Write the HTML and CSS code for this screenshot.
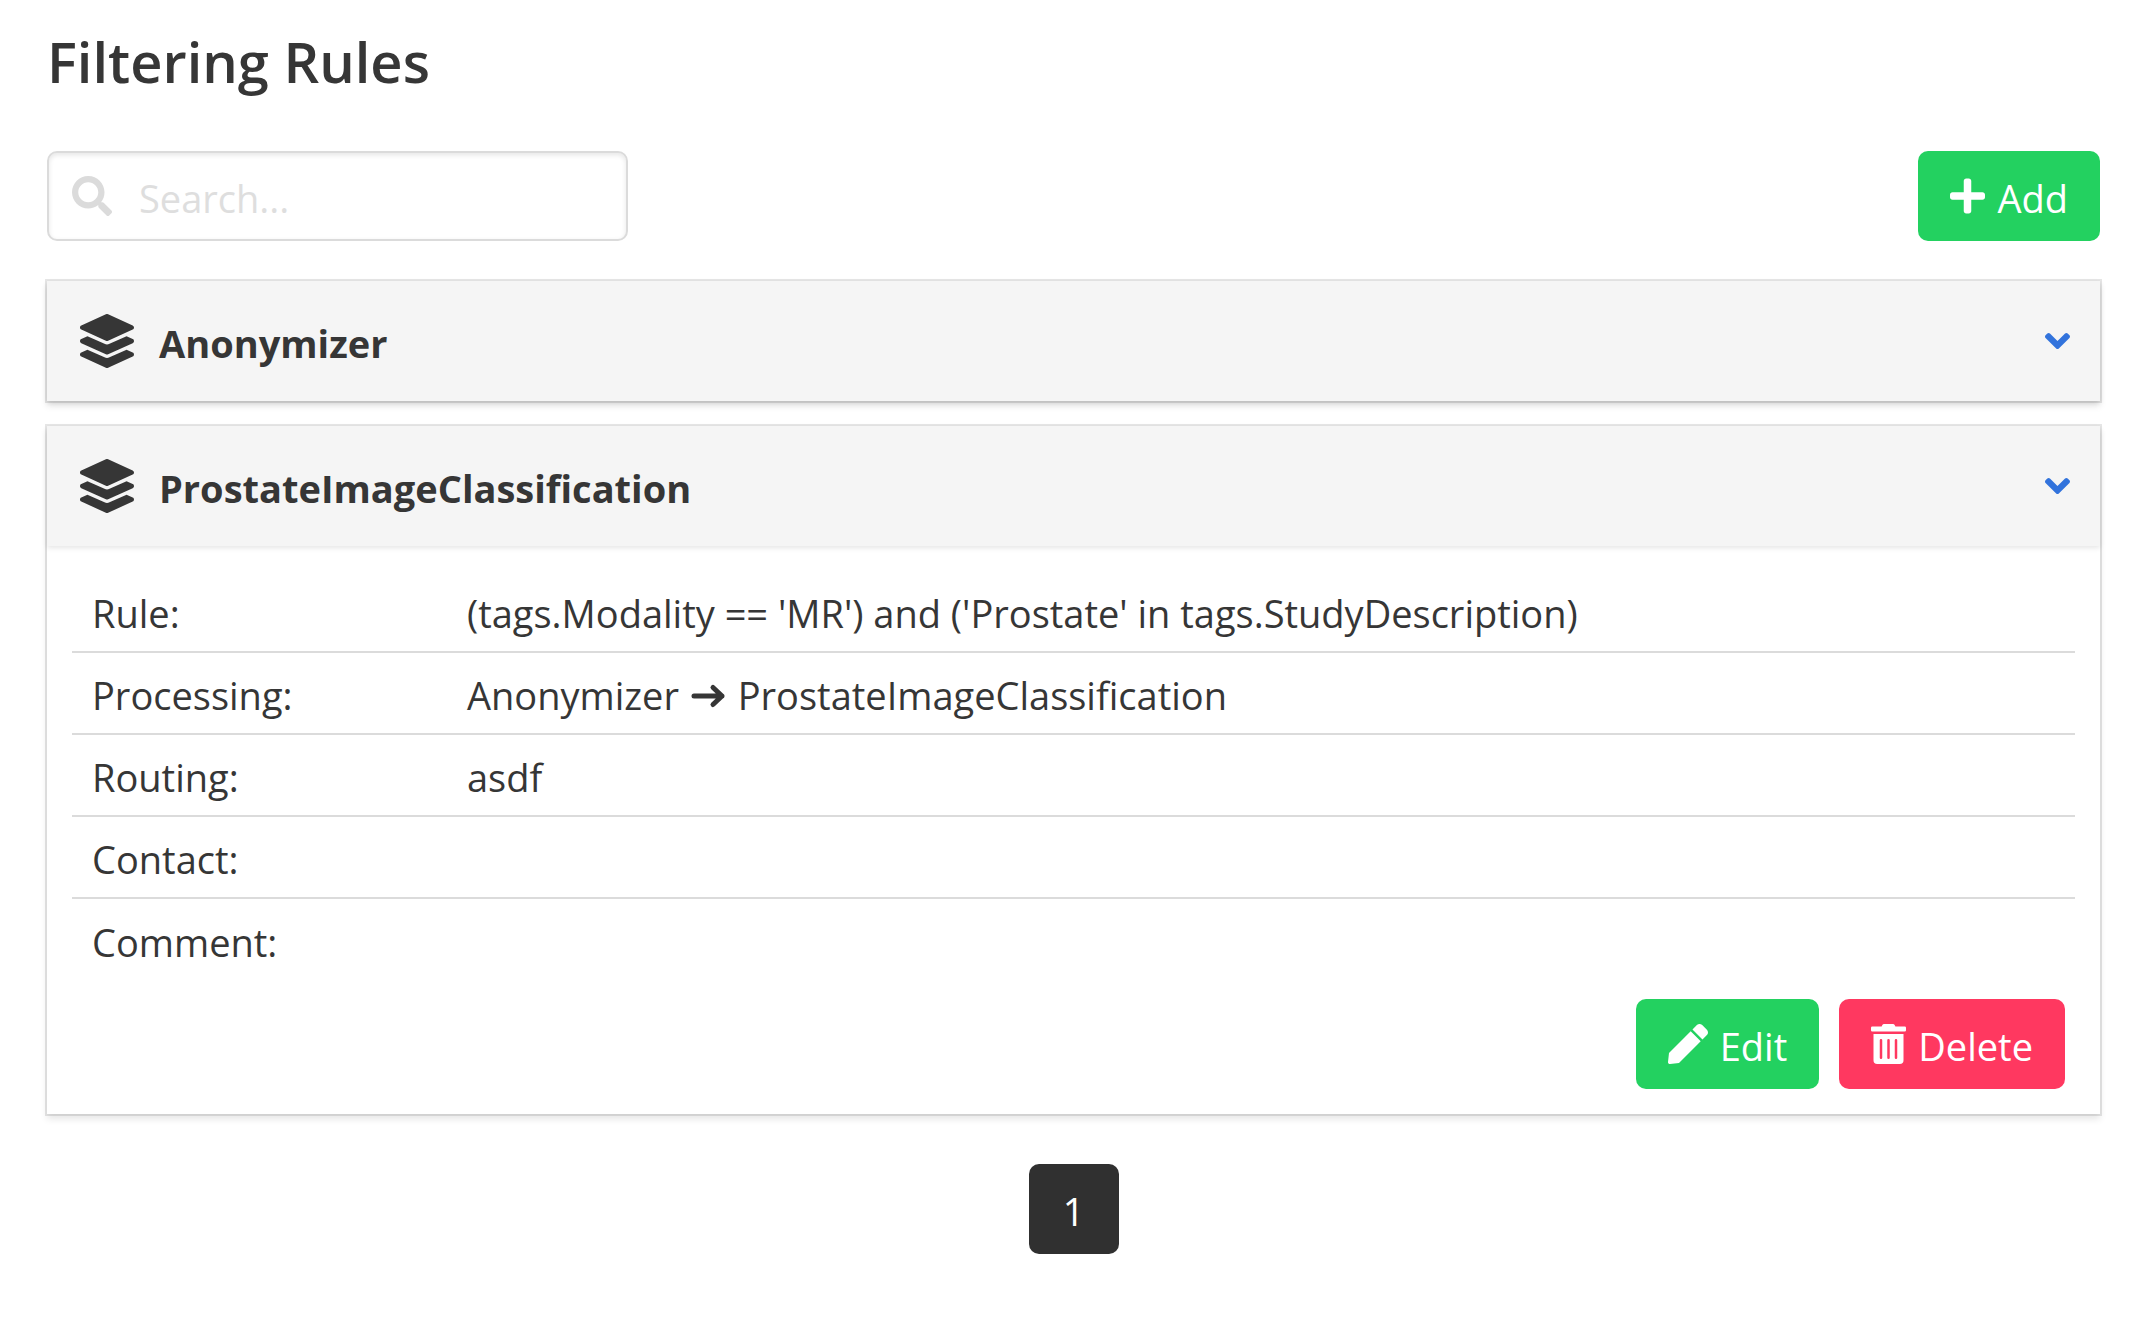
FILE: index.html
```html
<!DOCTYPE html>
<html lang="en">
<head>
<meta charset="utf-8">
<title>Filtering Rules</title>
<link rel="stylesheet" href="styles.css">
</head>
<body>
<svg class="sprite" aria-hidden="true">
  <symbol id="layers" viewBox="0 0 512 512"><path d="M12.41 148.02l232.94 105.67c6.8 3.09 14.49 3.09 21.29 0l232.94-105.67c16.55-7.51 16.55-32.52 0-40.03L266.65 2.31a25.607 25.607 0 0 0-21.29 0L12.41 107.98c-16.55 7.51-16.55 32.53 0 40.04zm487.18 88.28l-58.09-26.33-161.64 73.27c-7.56 3.43-15.59 5.17-23.86 5.17s-16.29-1.74-23.86-5.17L70.51 209.97l-58.1 26.33c-16.55 7.5-16.55 32.5 0 40l232.94 105.59c6.8 3.08 14.49 3.08 21.29 0L499.59 276.3c16.55-7.5 16.55-32.5 0-40zm0 127.8l-57.87-26.23-161.86 73.37c-7.56 3.43-15.59 5.17-23.86 5.17s-16.29-1.74-23.86-5.17L70.29 337.87 12.41 364.1c-16.55 7.5-16.55 32.5 0 40l232.94 105.59c6.8 3.08 14.49 3.08 21.29 0L499.59 404.1c16.55-7.5 16.55-32.5 0-40z"/></symbol>
  <symbol id="chevron" viewBox="0 0 320 512"><path d="M143 352.300L7 216.300c-9.400-9.400-9.400-24.600 0-33.900l22.600-22.600c9.400-9.400 24.600-9.400 33.900 0l96.400 96.400 96.400-96.400c9.400-9.400 24.600-9.400 33.900 0l22.600 22.600c9.400 9.400 9.400 24.600 0 33.900l-136 136c-9.200 9.400-24.400 9.400-33.800 0z"/></symbol>
</svg>
<main class="page">
  <h1 class="title">Filtering Rules</h1>
  <div class="toolbar">
    <label class="search">
      <svg class="icon search-icon" viewBox="0 0 512 512" aria-hidden="true"><path d="M505 442.7L405.3 343c-4.500-4.500-10.600-7-17-7H372c27.600-35.300 44-79.700 44-128C416 93.100 322.900 0 208 0S0 93.100 0 208s93.100 208 208 208c48.300 0 92.700-16.400 128-44v16.300c0 6.400 2.500 12.500 7 17l99.700 99.700c9.400 9.400 24.600 9.400 33.900 0l28.300-28.300c9.400-9.400 9.400-24.600.1-34zM208 336c-70.700 0-128-57.200-128-128 0-70.700 57.200-128 128-128 70.700 0 128 57.200 128 128 0 70.700-57.200 128-128 128z"/></svg>
      <input class="search-input" type="text" placeholder="Search..." aria-label="Search">
    </label>
    <button class="button success" type="button">
      <svg class="icon narrow" viewBox="0 0 448 512" aria-hidden="true"><path d="M416 208H272V64c0-17.670-14.330-32-32-32h-32c-17.670 0-32 14.330-32 32v144H32c-17.670 0-32 14.330-32 32v32c0 17.670 14.330 32 32 32h144v144c0 17.670 14.330 32 32 32h32c17.670 0 32-14.330 32-32V304h144c17.670 0 32-14.330 32-32v-32c0-17.670-14.330-32-32-32z"/></svg>
      Add
    </button>
  </div>

  <section class="card">
    <header class="card-header">
      <svg class="icon layers" aria-hidden="true"><use href="#layers"/></svg>
      <h2 class="card-title">Anonymizer</h2>
      <button class="toggle" type="button" aria-label="Expand Anonymizer"><svg class="icon chevron" aria-hidden="true"><use href="#chevron"/></svg></button>
    </header>
  </section>

  <section class="card">
    <header class="card-header">
      <svg class="icon layers" aria-hidden="true"><use href="#layers"/></svg>
      <h2 class="card-title">ProstateImageClassification</h2>
      <button class="toggle" type="button" aria-label="Collapse ProstateImageClassification"><svg class="icon chevron" aria-hidden="true"><use href="#chevron"/></svg></button>
    </header>
    <div class="card-content">
      <table class="details">
        <tr><th scope="row">Rule:</th><td>(tags.Modality == 'MR') and ('Prostate' in tags.StudyDescription)</td></tr>
        <tr><th scope="row">Processing:</th><td>Anonymizer <svg class="icon arrow" viewBox="0 0 35 40" aria-hidden="true"><path d="M3 20H31M22 11.500L31 20L22 28.500"/></svg> ProstateImageClassification</td></tr>
        <tr><th scope="row">Routing:</th><td>asdf</td></tr>
        <tr><th scope="row">Contact:</th><td></td></tr>
        <tr><th scope="row">Comment:</th><td></td></tr>
      </table>
      <div class="actions">
        <button class="button success" type="button">
          <svg class="icon" viewBox="0 0 512 512" aria-hidden="true"><path d="M290.740 93.240l128.020 128.020-277.990 277.990-114.140 12.600C11.350 513.540-1.560 500.620.140 485.340l12.700-114.220 277.900-277.880zm207.200-19.060l-60.110-60.110c-18.750-18.750-49.160-18.750-67.910 0l-56.550 56.550 128.020 128.020 56.550-56.550c18.750-18.760 18.750-49.160 0-67.910z"/></svg>
          Edit
        </button>
        <button class="button danger" type="button">
          <svg class="icon narrow" viewBox="0 0 448 512" aria-hidden="true"><path d="M32 464a48 48 0 0 0 48 48h288a48 48 0 0 0 48-48V128H32zm272-256a16 16 0 0 1 32 0v224a16 16 0 0 1-32 0zm-96 0a16 16 0 0 1 32 0v224a16 16 0 0 1-32 0zm-96 0a16 16 0 0 1 32 0v224a16 16 0 0 1-32 0zM432 32H312l-9.400-18.700A24 24 0 0 0 281.100 0H166.800a23.720 23.720 0 0 0-21.400 13.300L136 32H16A16 16 0 0 0 0 48v32a16 16 0 0 0 16 16h416a16 16 0 0 0 16-16V48a16 16 0 0 0-16-16z"/></svg>
          Delete
        </button>
      </div>
    </div>
  </section>

  <nav class="pagination" aria-label="Pagination"><a class="page-link" href="#" aria-current="page">1</a></nav>
</main>
</body>
</html>
```
FILE: styles.css
```css
*, *::before, *::after { box-sizing: border-box; }

body {
  margin: 0;
  background: #fff;
  color: #363636;
  font: 38px/60px "Segoe UI", "Open Sans", sans-serif;
}

.sprite { display: none; }

.page { padding: 22px 41px 64px 47px; }

.title {
  margin: 0 0 51px;
  font-size: 56px;
  line-height: 78px;
  font-weight: 600;
}

.icon {
  flex: none;
  width: 40px;
  height: 40px;
  fill: currentColor;
}

.icon.narrow { width: 35px; }

.toolbar {
  display: flex;
  justify-content: space-between;
  margin-bottom: 40px;
}

.search {
  display: flex;
  align-items: center;
  gap: 27px;
  width: 581px;
  height: 90px;
  padding: 0 23px;
  border: 2px solid #dbdbdb;
  border-radius: 10px;
  box-shadow: inset 0 2px 5px rgba(10, 10, 10, 0.1);
}

.search-icon { color: #dbdbdb; }

.search-input {
  flex: 1;
  min-width: 0;
  height: 60px;
  margin-top: 4px;
  padding: 0;
  border: 0;
  outline: 0;
  background: none;
  color: inherit;
  font: inherit;
}

.search-input::placeholder { color: #dedede; opacity: 1; }

.button {
  display: flex;
  align-items: center;
  gap: 12px;
  height: 90px;
  padding: 4px 32px 0;
  border: 0;
  border-radius: 10px;
  color: #fff;
  font: inherit;
  cursor: pointer;
}

.button .icon { margin-bottom: 4px; }
.success { background: #23d160; }
.danger { background: #ff3860; }

.card {
  margin-bottom: 25px;
  background: #fff;
  box-shadow: 0 5px 7px rgba(10, 10, 10, 0.1), 0 0 0 2px rgba(10, 10, 10, 0.1);
}

.card-header {
  display: flex;
  align-items: center;
  height: 120px;
  padding: 0 30px 0 33px;
  background: #f5f5f5;
  box-shadow: 0 2px 5px rgba(10, 10, 10, 0.1);
}

.layers { width: 54px; height: 54px; }

.card-title {
  flex: 1;
  margin: 4px 0 0 25px;
  font-size: 38px;
  line-height: 60px;
  font-weight: 700;
}

.toggle {
  display: flex;
  padding: 0;
  border: 0;
  background: none;
  color: #3273dc;
  cursor: pointer;
}

.chevron { width: 25px; }

.card-content { padding: 24px 25px 25px; }

.details {
  width: 100%;
  border-collapse: collapse;
  table-layout: fixed;
}

.details th,
.details td {
  height: 82px;
  padding: 12px 20px 8px;
  border-bottom: 2px solid #dbdbdb;
  text-align: left;
  font-weight: 400;
}

.details th { width: 375px; }

.details tr:last-child > * { border-bottom: 0; }

.arrow {
  width: 35px;
  margin: 0 2px;
  fill: none;
  stroke: currentColor;
  stroke-width: 5;
  stroke-linecap: round;
  stroke-linejoin: round;
  vertical-align: -6px;
}

.actions {
  display: flex;
  justify-content: flex-end;
  gap: 20px;
  padding: 19px 10px 0;
}

.pagination {
  display: flex;
  justify-content: center;
  margin-top: 50px;
}

.page-link {
  width: 90px;
  height: 90px;
  padding-top: 17px;
  border-radius: 10px;
  background: #303030;
  color: #fff;
  text-align: center;
  text-decoration: none;
}
```
